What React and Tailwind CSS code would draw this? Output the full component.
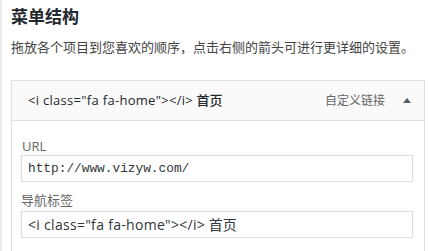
export default function App() {
  const sans = { fontFamily: '"Open Sans", "Noto Sans CJK SC", sans-serif' };
  return (
    <div className="w-[428px] h-[251px] overflow-hidden bg-white border-l-2 border-[#ececec] pl-[9px]" style={sans}>
      <div className="pt-[5px] h-[24px] box-content text-[17px] leading-[24px] font-bold text-[#23282d]">菜单结构</div>
      <div className="mt-[8px] text-[13px] leading-[20px] text-[#444]">拖放各个项目到您喜欢的顺序，点击右侧的箭头可进行更详细的设置。</div>
      <div className="mt-[23px] w-[414px] border border-[#dfdfdf] h-[200px]">
        <div className="h-[40px] bg-[#fafafa] border-b border-[#dfdfdf] flex items-center pl-[16px] pr-[13px]">
          <span className="text-[13px] text-[#23282d] font-medium pt-[1px]"><span className="tracking-[0.3px]">&lt;i class="fa fa-home"&gt;&lt;/i&gt;</span> 首页</span>
          <span className="ml-auto text-[12px] text-[#666] pt-[1px]">自定义链接</span>
          <span className="ml-[18px] w-0 h-0 border-l-[4px] border-r-[4px] border-b-[5px] border-l-transparent border-r-transparent border-b-[#555d66]"></span>
        </div>
        <div className="pl-[9px] pr-[11px] pt-[17px]">
          <div className="pl-[1px] text-[13px] leading-[16px] text-[#666]">URL</div>
          <div className="mt-[1px] h-[27px] border border-[#dddddd] flex items-center px-[6px] text-[12.8px] text-[#32373c]" style={{ fontFamily: '"Liberation Mono", monospace' }}>http://www.vizyw.com/</div>
          <div className="mt-[10px] text-[13px] leading-[16px] text-[#666]">导航标签</div>
          <div className="mt-[3px] h-[27px] border border-[#dddddd] flex items-center px-[6px] text-[14px] text-[#32373c]"><span className="tracking-[0.3px]">&lt;i class="fa fa-home"&gt;&lt;/i&gt;</span>&nbsp;首页</div>
        </div>
      </div>
    </div>
  );
}
